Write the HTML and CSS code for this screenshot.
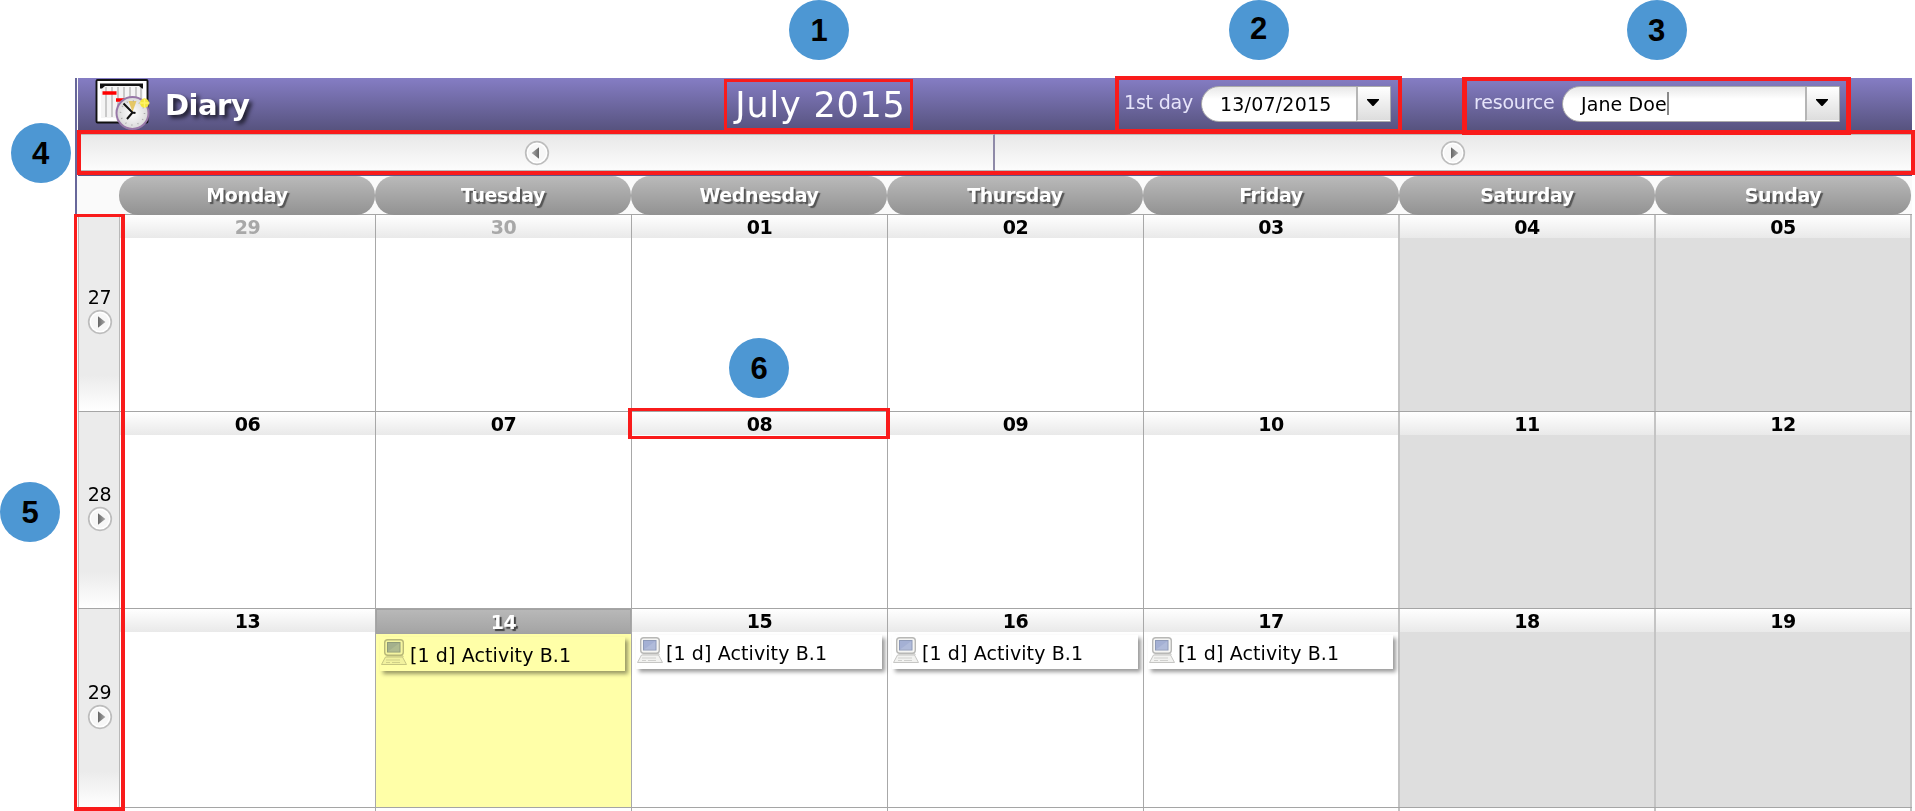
FILE: index.html
```
<!DOCTYPE html>
<html lang="en">
<head>
<meta charset="utf-8">
<title>Diary</title>
<link rel="stylesheet" href="styles.css">
</head>
<body>
<svg class="defs" width="0" height="0">
  <defs>
    <linearGradient id="ga" x1="0" x2="1"><stop offset="0" stop-color="#666"/><stop offset="1" stop-color="#aaa"/></linearGradient>
    <symbol id="play" viewBox="0 0 26 26">
      <circle cx="13" cy="13" r="11.3" fill="#fff" stroke="#bdbdbd" stroke-width="1.7"/>
      <circle cx="13" cy="13" r="9" fill="#f7f7f7"/>
      <path d="M11 7.3v11.4L18.4 13z" fill="url(#ga)"/>
    </symbol>
    <symbol id="pc" viewBox="0 0 28 28">
      <path d="M5.500 19h17l4 7.500h-25z" fill="#f2f2f0" stroke="#c6c6c4" stroke-linejoin="round"/>
      <path d="M6 22h14M6 24.500h4M12 24.500h8" stroke="#d0d0ce"/>
      <path d="M8 16h14l2 3H6z" fill="#d4d4d2"/>
      <rect x="4.700" y="1.700" width="18.600" height="15.600" rx="3" fill="#f5f5f3" stroke="#b8b8b6" stroke-width="1.400"/>
      <rect x="7.500" y="4.500" width="12.500" height="9.500" class="screen"/>
      <path d="M8 13.500L19.500 5v9H8z" fill="#fff" opacity=".14"/>
    </symbol>
  </defs>
</svg>
<div class="diary">
  <header class="bar">
    <svg class="logo" viewBox="0 0 56 52" width="56" height="52">
      <defs><radialGradient id="cl"><stop offset="0" stop-color="#fff"/><stop offset="1" stop-color="#d9d9d9"/></radialGradient></defs>
      <rect x="2.500" y="2" width="51" height="42.500" rx="1" fill="#fff" stroke="#111" stroke-width="1.900"/>
      <path d="M7 6h42v34H7z" fill="#f4f4f4"/>
      <path d="M12 9v30M18 9v30M24 9v30M30 9v30M36 9v30M42 9v30M47 9v30" stroke="#bbb" stroke-width="1.500"/>
      <path d="M6 5.500h43v5h-1l-3-2.500H11l-3 2.500H6z" fill="#111"/>
      <path d="M8.500 15h14M22 22h12" stroke="#f00" stroke-width="3.500"/>
      <circle cx="38.500" cy="35" r="16" fill="url(#cl)" stroke="#9878a8" stroke-width="2"/>
      <path d="M38.500 34l-4-11h8z" fill="#e5c766"/>
      <circle cx="38.500" cy="35" r="12" fill="none" stroke="#aaa" stroke-width="1.500" stroke-dasharray="1 5.280"/>
      <path d="M29.500 25.500l9 9L33 41M38.500 34.500l3 .5" fill="none" stroke="#111" stroke-width="2"/>
      <circle cx="50.500" cy="25" r="4.500" fill="#f3e63c"/><path d="M50.500 20v10M45.500 25h10" stroke="#fff36a" stroke-width="1.500"/>
    </svg>
    <h1 class="title">Diary</h1>
    <div class="month"><span>July 2015</span></div>
    <label class="label day">1st day</label>
    <div class="combo date"><span class="value">13/07/2015</span><span class="drop"><svg width="12" height="7"><path d="M0 0h12v1L6.500 7h-1L0 1z"/></svg></span></div>
    <label class="label res">resource</label>
    <div class="combo person"><span class="value"><span class="name">Jane Doe</span><i class="caret"></i></span><span class="drop"><svg width="12" height="7"><path d="M0 0h12v1L6.500 7h-1L0 1z"/></svg></span></div>
  </header>
  <nav class="nav">
    <div class="step"><svg class="btn flip" width="26" height="26"><use href="#play"/></svg></div>
    <div class="step"><svg class="btn" width="26" height="26"><use href="#play"/></svg></div>
  </nav>
  <div class="days">
    <span>Monday</span><span>Tuesday</span><span>Wednesday</span><span>Thursday</span><span>Friday</span><span>Saturday</span><span>Sunday</span>
  </div>
  <div class="week">
    <div class="num"><span>27</span><svg width="26" height="26"><use href="#play"/></svg></div>
    <div class="cell out"><b>29</b></div><div class="cell out"><b>30</b></div><div class="cell"><b>01</b></div><div class="cell"><b>02</b></div><div class="cell"><b>03</b></div><div class="cell off"><b>04</b></div><div class="cell off"><b>05</b></div>
  </div>
  <div class="week">
    <div class="num"><span>28</span><svg width="26" height="26"><use href="#play"/></svg></div>
    <div class="cell"><b>06</b></div><div class="cell"><b>07</b></div><div class="cell"><b>08</b></div><div class="cell"><b>09</b></div><div class="cell"><b>10</b></div><div class="cell off"><b>11</b></div><div class="cell off"><b>12</b></div>
  </div>
  <div class="week tall">
    <div class="num"><span>29</span><svg width="26" height="26"><use href="#play"/></svg></div>
    <div class="cell"><b>13</b></div>
    <div class="cell today"><b>14</b><div class="task"><svg width="28" height="28"><use href="#pc"/></svg><span>[1 d] Activity B.1</span></div></div>
    <div class="cell"><b>15</b><div class="task"><svg width="28" height="28"><use href="#pc"/></svg><span>[1 d] Activity B.1</span></div></div>
    <div class="cell"><b>16</b><div class="task"><svg width="28" height="28"><use href="#pc"/></svg><span>[1 d] Activity B.1</span></div></div>
    <div class="cell"><b>17</b><div class="task"><svg width="28" height="28"><use href="#pc"/></svg><span>[1 d] Activity B.1</span></div></div>
    <div class="cell off"><b>18</b></div><div class="cell off"><b>19</b></div>
  </div>
  <div class="week next">
    <div class="num"></div>
    <div class="cell"></div><div class="cell"></div><div class="cell"></div><div class="cell"></div><div class="cell"></div><div class="cell"></div><div class="cell"></div>
  </div>
</div>
<div class="frame f4"></div><div class="frame f1"></div><div class="frame f2"></div><div class="frame f3"></div><div class="frame f5"></div><div class="frame f6"></div>
<div class="pin p1">1</div><div class="pin p2">2</div><div class="pin p3">3</div><div class="pin p4">4</div><div class="pin p5">5</div><div class="pin p6">6</div>
</body>
</html>
```
FILE: styles.css
```
* { box-sizing: border-box; }
html, body { height: 811px; overflow: hidden; }
body { margin: 0; position: relative; background: #fff; font: 19px "DejaVu Sans", sans-serif; color: #000; }
.defs { position: absolute; }
svg { display: block; flex: none; }

.diary { margin: 78px 3px 0 75px; height: 733px; border-left: 2px solid #67679a; padding-left: 1px; overflow: hidden; background: #fafafa; }

/* title bar */
.bar { height: 52px; display: flex; background: linear-gradient(#857dc4, #57537f); }
.logo { margin: 0 0 0 16px; }
.title { margin: 11px 0 0 15px; width: 91px; font-size: 29px; line-height: 33px; letter-spacing: -.5px; color: #fff; text-shadow: 3px 3px 4px rgba(0,0,0,.75); }
.month { margin-left: 470px; width: 189px; padding-top: 6px; text-align: center; font-size: 35px; line-height: 42px; color: #fff; white-space: nowrap; letter-spacing: .8px; }
.label { line-height: 22px; padding-top: 13px; color: #e6e4fa; white-space: nowrap; letter-spacing: -.2px; }
.day { margin-left: 209px; width: 77px; }
.res { margin-left: 83px; width: 88px; }
.combo { margin-top: 8px; height: 36px; display: flex; border: 1px solid #aaa; border-radius: 18px 0 0 18px; background: linear-gradient(#e8e8e8, #fff 12px); overflow: hidden; }
.date { width: 190px; letter-spacing: .2px; }
.person { width: 278px; }
.value { flex: 1; padding-left: 18px; line-height: 35px; display: flex; white-space: nowrap; }
.name { letter-spacing: .1px; }
.caret { width: 2px; height: 23px; margin-top: 5px; background: #888; }
.drop { width: 34px; border-left: 2px solid #b5b5b5; border-bottom: 1px solid #fff; background: linear-gradient(#fff, #ddd); display: flex; justify-content: center; padding: 12px 2px 0 0; }

/* previous / next */
.nav { height: 46px; display: grid; grid-template-columns: 917px 1fr; border-bottom: 1px solid #5d5887; background: #fff; }
.nav { height: 46px; }
.step { display: flex; justify-content: center; margin-top: 4px; height: 37px; padding-top: 5px; background: linear-gradient(#e8e8e8, #fcfcfc); border: solid #bbb; border-width: 1px 1px 1px 0; }
.step:first-child { border-right: 2px solid #8f8aa8; padding-left: 2px; }
.flip { transform: scaleX(-1); }

.days { height: 38px; padding-left: 41px; display: grid; grid-template-columns: repeat(7, 256px); }
.days span { border-radius: 19px; background: linear-gradient(#bababa, #929292); color: #fff; font-weight: bold; text-align: center; line-height: 39px; letter-spacing: -.4px; text-shadow: 2px 2px 1px #555; }

/* weeks */
.week { height: 197px; display: grid; grid-template-columns: 42px repeat(7, 256px); border-top: 1px solid #a5a5a5; background: #fff; }
.tall { height: 199px; }
.num { background: linear-gradient(#ebebeb calc(100% - 36px), #fff); border: solid #b8b8b8; border-width: 0 1px; display: flex; flex-direction: column; align-items: center; padding-top: 70px; }
.num span { line-height: 24px; margin-left: 1px; letter-spacing: -.4px; }
.num svg { margin: 0 0 0 2px; }
.tall .num { padding-top: 71px; }
.cell { border-right: 1px solid #a8a8a8; }
.cell:nth-child(n+6) { border-right: 2px solid #c4c4c4; }
.cell b { display: block; height: 23px; line-height: 25px; text-align: center; letter-spacing: -.4px; background: linear-gradient(#fff, #e9e9e9); }
.out b { color: #a8a8a8; }
.off { background: #dedede; }
.today { background: #ffffa8; }
.cell.today b { height: 25px; line-height: 25px; color: #fff; background: linear-gradient(#b8b8b8, #a4a4a4); border: 1px solid #a2a2a2; text-shadow: 2px 2px 1px #444; }
.task { margin: 3px 5px 0 4px; height: 34px; display: flex; background: #fff; box-shadow: 3px 3px 4px rgba(0,0,0,.4); }
.task svg { margin-top: 1px; }
.task span { margin-left: 2px; line-height: 36px; white-space: nowrap; letter-spacing: .1px; }
.screen { fill: #a4b0d4; stroke: #8e9ab8; }
.today .task { background: #ffffa8; margin-right: 6px; }
.today .task svg { mix-blend-mode: multiply; }

/* annotations */
.frame { position: absolute; border: 4px solid #f91b1b; }
.f1 { left: 724px; top: 79px; width: 189px; height: 52px; border-width: 3px; }
.f2 { left: 1115px; top: 76px; width: 287px; height: 57px; }
.f3 { left: 1462px; top: 77px; width: 389px; height: 58px; border-width: 4px 5px; }
.f4 { left: 77px; top: 130px; width: 1838px; height: 45px; }
.f5 { left: 74px; top: 214px; width: 51px; height: 597px; border-width: 3px 4px 4px 3px; }
.f6 { left: 628px; top: 408px; width: 262px; height: 31px; border-width: 3px 4px; }
.pin { position: absolute; width: 60px; height: 60px; border-radius: 50%; background: #4d97d3; font: bold 31px/61px "Liberation Sans", sans-serif; text-align: center; }
.p1 { left: 789px; top: 0; }
.p2 { left: 1228.5px; top: 0; line-height: 57px; }
.p3 { left: 1626.5px; top: 0; }
.p4 { left: 10.5px; top: 122.5px; }
.p5 { left: 0; top: 482px; }
.p6 { left: 729px; top: 338px; }
```
